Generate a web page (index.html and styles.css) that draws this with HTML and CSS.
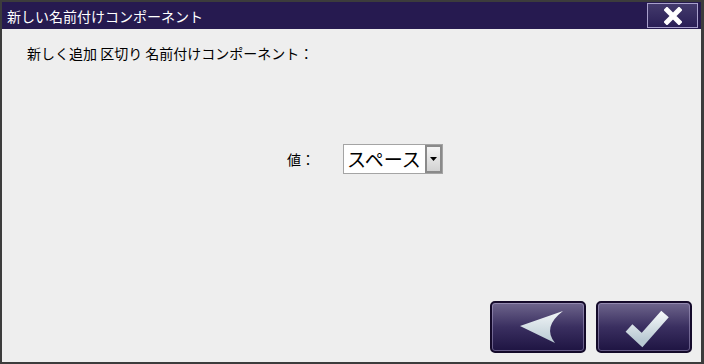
FILE: index.html
```html
<!DOCTYPE html>
<html lang="ja">
  <head>
    <meta charset="UTF-8" />
    <title>新しい名前付けコンポーネント</title>
    <link rel="stylesheet" href="styles.css">
  </head>
  <body>
    <div class="dialog">
      <!-- Title bar -->
      <div class="titlebar">
        <span class="title">新しい名前付けコンポーネント</span>
        <button class="close-btn" aria-label="閉じる">
          <svg width="18" height="18" viewBox="0 0 18 18">
            <path d="M3 3 L15 15 M15 3 L3 15" stroke="#fff" stroke-width="5" stroke-linecap="square" />
          </svg>
        </button>
      </div>

      <!-- Content -->
      <div class="content">
        <p class="heading">新しく追加 区切り 名前付けコンポーネント：</p>

        <div class="value-row">
          <span class="value-label">値：</span>
          <div class="select">
            <span class="select-text">スペース</span>
            <span class="select-arrow">
              <svg width="7" height="4" viewBox="0 0 7 4"><path d="M0 0 H7 L3.5 4 Z" fill="#000" /></svg>
            </span>
          </div>
        </div>

        <div class="actions">
          <button class="action-btn" aria-label="戻る">
            <svg width="92" height="48" viewBox="0 0 92 48">
              <defs>
                <linearGradient id="arrowFill" x1="0" y1="0" x2="0" y2="1">
                  <stop offset="0" stop-color="#f2f6f8" />
                  <stop offset="1" stop-color="#b9c9d2" />
                </linearGradient>
              </defs>
              <path d="M28 23 L71 8 Q50 24 63 40 Z" fill="url(#arrowFill)" />
            </svg>
          </button>
          <button class="action-btn" aria-label="OK">
            <svg width="92" height="48" viewBox="0 0 92 48">
              <defs>
                <linearGradient id="checkFill" x1="0" y1="0" x2="0" y2="1">
                  <stop offset="0" stop-color="#f2f6f8" />
                  <stop offset="1" stop-color="#b9c9d2" />
                </linearGradient>
              </defs>
              <path d="M31 25 L44 37 L67 11" fill="none" stroke="url(#checkFill)" stroke-width="10" stroke-linejoin="miter" />
            </svg>
          </button>
        </div>
      </div>
    </div>
  </body>
</html>
```

FILE: styles.css
```css
* {
  margin: 0;
  padding: 0;
  box-sizing: border-box;
  font-family: "Noto Sans CJK JP", "DejaVu Sans", sans-serif;
}

body {
  width: 704px;
  height: 364px;
  background-color: #3c3c3c;
  overflow: hidden;
}

.dialog {
  margin: 2px 3px 2px 2px;
  height: 360px;
  display: flex;
  flex-direction: column;
}

/* Title bar */
.titlebar {
  height: 27px;
  background-color: #261a50;
  display: flex;
  align-items: center;
  justify-content: space-between;
  padding: 0 3px 0 5px;
}

.title {
  color: #fff;
  font-size: 14px;
  line-height: 20px;
}

.close-btn {
  width: 51px;
  height: 25px;
  border: 1px solid #a8a0cc;
  background: linear-gradient(#433a6c, #2a1f56);
  display: flex;
  align-items: center;
  justify-content: center;
  cursor: pointer;
}

/* Content */
.content {
  flex-grow: 1;
  background-color: #eeeeee;
  display: flex;
  flex-direction: column;
  padding: 14px 9px 9px 25px;
}

.heading {
  font-size: 14px;
  line-height: 20px;
  color: #000;
}

.value-row {
  display: flex;
  align-items: center;
  margin-top: 81px;
  padding-left: 260px;
}

.value-label {
  font-size: 14px;
  color: #000;
  width: 56px;
}

.select {
  width: 100px;
  height: 30px;
  border: 1px solid #a4a4a4;
  background-color: #fff;
  display: flex;
  align-items: center;
  justify-content: space-between;
  padding: 0 0 0 3px;
}

.select-text {
  font-size: 19px;
  line-height: 26px;
  color: #000;
}

.select-arrow {
  width: 17px;
  height: 28px;
  border: 2px solid #8a8a8a;
  background: linear-gradient(#f4f4f4, #d2d2d2);
  display: flex;
  align-items: center;
  justify-content: center;
}

/* Bottom buttons */
.actions {
  margin-top: auto;
  display: flex;
  justify-content: flex-end;
  gap: 10px;
}

.action-btn {
  width: 96px;
  height: 52px;
  border: 2px solid #140a2a;
  border-radius: 5px;
  background: linear-gradient(#6e658c, #3a2f60 50%, #1e1442);
  box-shadow: inset 0 0 0 1px rgba(190, 180, 220, 0.45);
  display: flex;
  align-items: center;
  justify-content: center;
  cursor: pointer;
}
```
